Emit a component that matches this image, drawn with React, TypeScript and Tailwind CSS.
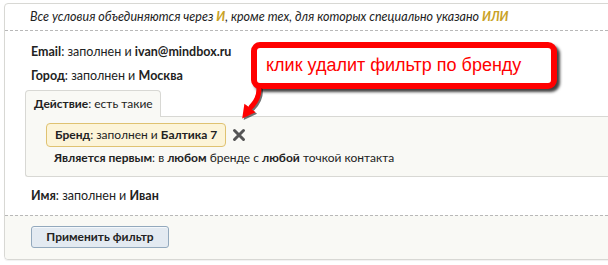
import React from "react";

const Field = ({ label, value }: { label: string; value: string }) => (
  <div className="h-[24px] flex items-center whitespace-nowrap">
    <b className="font-bold">{label}</b>
    <span>: заполнен и&nbsp;</span>
    <b className="font-bold">{value}</b>
  </div>
);

export default function App() {
  return (
    <div className="relative w-[608px] h-[265px] overflow-hidden bg-white text-[12.5px] text-[#222] font-['Lato',sans-serif]">
      <div className="mt-[3px] ml-[4px] w-[640px] border border-[#d8d8d4] rounded-[4px] shadow-[0_1px_1px_rgba(0,0,0,0.06)]">
        {/* note */}
        <div className="h-[27px] flex items-center pl-[25px] pt-[1px] italic whitespace-nowrap text-[12.5px] text-[#222] border-b border-dashed border-[#b8b8b8]">
          Все условия объединяются через&nbsp;
          <span className="font-bold text-[#c9a227]">И</span>, кроме тех, для которых специально указано&nbsp;
          <span className="font-bold text-[#c9a227]">ИЛИ</span>
        </div>

        <div className="pt-[9px] pl-[26px]">
          <Field label="Email" value="ivan@mindbox.ru" />
          <Field label="Город" value="Москва" />

          {/* action group */}
          <div className="mt-[2px] ml-[-6px] text-[12px]">
            <div className="relative z-10 -mb-px w-[136px] h-[27px] flex items-center pl-[8px] whitespace-nowrap bg-[#f9f9f5] border border-b-0 border-[#d8d8d4] rounded-tl-[4px] rounded-tr-[4px]">
              <b className="font-bold">Действие</b>: есть такие
            </div>
            <div className="h-[61px] bg-[#f9f9f5] border border-r-0 border-[#d8d8d4] rounded-bl-[3px] pl-[20px] pt-[6px]">
              <div className="flex items-center">
                <div className="h-[24px] flex items-center px-[8px] whitespace-nowrap bg-[#fcf4d8] border border-[#dfc271] rounded-[4px]">
                  <b className="font-bold">Бренд</b>: заполнен и&nbsp;<b className="font-bold">Балтика 7</b>
                </div>
                <svg width="14" height="14" viewBox="0 0 14 14" className="ml-[6px]">
                  <path d="M2.5 2.5 L11.5 11.5 M11.5 2.5 L2.5 11.5" stroke="#555" strokeWidth="3" strokeLinecap="round" />
                </svg>
              </div>
              <div className="h-[22px] flex items-center pl-[8px] whitespace-nowrap">
                <b className="font-bold">Является первым</b>: в&nbsp;<b className="font-bold">любом</b>&nbsp;бренде с&nbsp;
                <b className="font-bold">любой</b>&nbsp;точкой контакта
              </div>
            </div>
          </div>

          <div className="pt-[7px] pb-[7px]">
            <div className="h-[24px] flex items-center whitespace-nowrap">
              <b className="font-bold">Имя</b>: заполнен и&nbsp;<b className="font-bold">Иван</b>
            </div>
          </div>
        </div>

        <div className="border-t border-dashed border-[#b8b8b8] bg-[#f9f9f5] pt-[10px] pb-[11px] pl-[26px] rounded-b-[4px]">
          <button className="w-[138px] h-[22px] flex items-center justify-center whitespace-nowrap bg-[#e3eaf1] border border-[#93a9bd] rounded-[3px] font-bold text-[12px] text-[#222] shadow-[inset_0_1px_0_#f4f8fb]">
            Применить фильтр
          </button>
        </div>
      </div>

      {/* callout */}
      <div className="absolute left-[251px] top-[42px] w-[306px] h-[47px] flex items-center pl-[9px] whitespace-nowrap bg-white border-[6px] border-[#ff0000] rounded-[9px] shadow-[3px_3px_3px_rgba(0,0,0,0.75)] font-['Liberation_Sans',Arial,sans-serif] text-[18px] text-[#ff0000]">
        клик удалит фильтр по бренду
      </div>

      {/* arrow */}
      <svg className="absolute left-[231px] top-[85px]" width="40" height="42" viewBox="0 0 40 42">
        <g transform="translate(1.5 1.5)" opacity="0.55">
          <path d="M28 4 C28 12 25 17 20 22" stroke="#000" strokeWidth="5" fill="none" strokeLinecap="round" />
          <path d="M13.4 18.8 L24.6 27.2 L11.2 33.4 Z" fill="#000" />
        </g>
        <path d="M28 4 C28 12 25 17 20 22" stroke="#ff0000" strokeWidth="5" fill="none" strokeLinecap="round" />
        <path d="M13.4 18.8 L24.6 27.2 L11.2 33.4 Z" fill="#ff0000" />
      </svg>
    </div>
  );
}
